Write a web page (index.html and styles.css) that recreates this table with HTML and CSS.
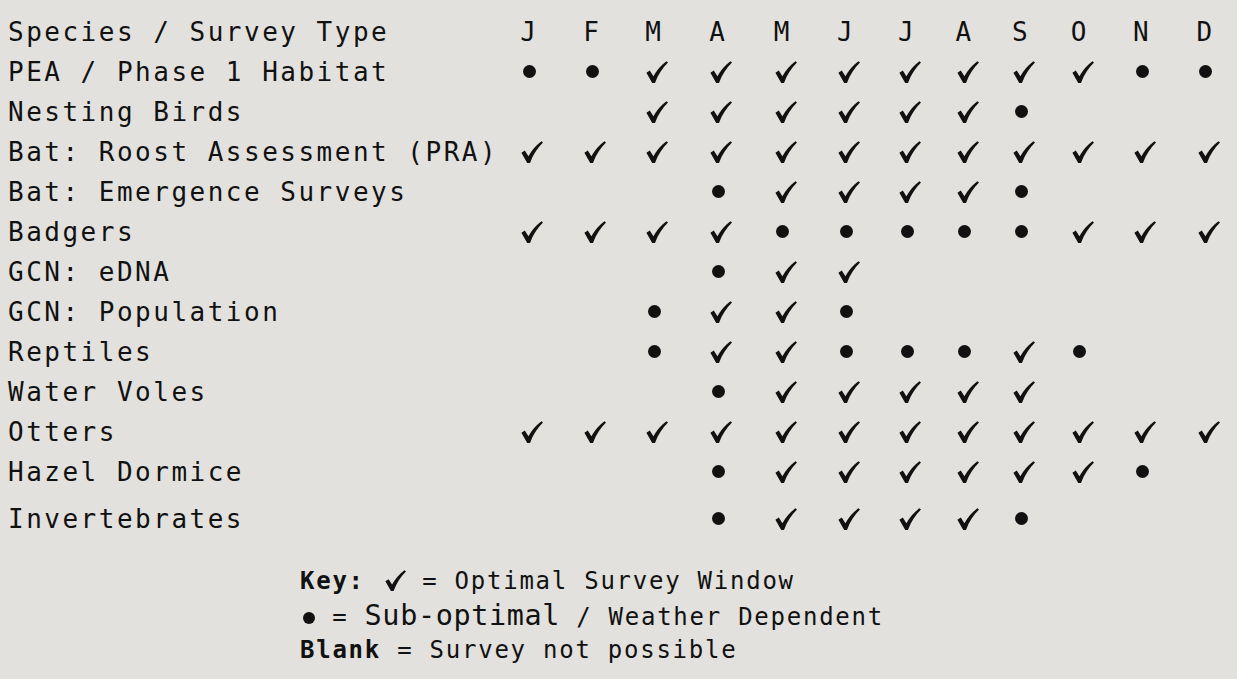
FILE: index.html
```html
<!DOCTYPE html>
<html lang="en">
<head>
<meta charset="utf-8">
<title>Survey Calendar</title>
<link rel="stylesheet" href="styles.css">
</head>
<body>
<svg class="defs" width="0" height="0" aria-hidden="true">
  <defs>
    <symbol id="tick" viewBox="0 0 22 22">
      <path d="M0.4 11.8 L3.8 9.6 L7.4 15.2 C10.6 9.6 15 4 20.4 0.2 L22 1.6 C16.6 6.8 12.2 13.6 9 21.9 L6.2 21.9 Z"/>
    </symbol>
  </defs>
</svg>
<main class="page">
  <div class="schedule">
    <div class="row head">
      <span class="label">Species / Survey Type</span>
      <span>J</span><span>F</span><span>M</span><span>A</span><span>M</span><span>J</span><span>J</span><span>A</span><span>S</span><span>O</span><span>N</span><span>D</span>
    </div>
    <div class="row">
      <span class="label">PEA / Phase 1 Habitat</span>
      <span><i class="dot"></i></span><span><i class="dot"></i></span><span><svg class="ck"><use href="#tick"/></svg></span><span><svg class="ck"><use href="#tick"/></svg></span><span><svg class="ck"><use href="#tick"/></svg></span><span><svg class="ck"><use href="#tick"/></svg></span><span><svg class="ck"><use href="#tick"/></svg></span><span><svg class="ck"><use href="#tick"/></svg></span><span><svg class="ck"><use href="#tick"/></svg></span><span><svg class="ck"><use href="#tick"/></svg></span><span><i class="dot"></i></span><span><i class="dot"></i></span>
    </div>
    <div class="row">
      <span class="label">Nesting Birds</span>
      <span></span><span></span><span><svg class="ck"><use href="#tick"/></svg></span><span><svg class="ck"><use href="#tick"/></svg></span><span><svg class="ck"><use href="#tick"/></svg></span><span><svg class="ck"><use href="#tick"/></svg></span><span><svg class="ck"><use href="#tick"/></svg></span><span><svg class="ck"><use href="#tick"/></svg></span><span><i class="dot"></i></span><span></span><span></span><span></span>
    </div>
    <div class="row">
      <span class="label">Bat: Roost Assessment (PRA)</span>
      <span><svg class="ck"><use href="#tick"/></svg></span><span><svg class="ck"><use href="#tick"/></svg></span><span><svg class="ck"><use href="#tick"/></svg></span><span><svg class="ck"><use href="#tick"/></svg></span><span><svg class="ck"><use href="#tick"/></svg></span><span><svg class="ck"><use href="#tick"/></svg></span><span><svg class="ck"><use href="#tick"/></svg></span><span><svg class="ck"><use href="#tick"/></svg></span><span><svg class="ck"><use href="#tick"/></svg></span><span><svg class="ck"><use href="#tick"/></svg></span><span><svg class="ck"><use href="#tick"/></svg></span><span><svg class="ck"><use href="#tick"/></svg></span>
    </div>
    <div class="row">
      <span class="label">Bat: Emergence Surveys</span>
      <span></span><span></span><span></span><span><i class="dot"></i></span><span><svg class="ck"><use href="#tick"/></svg></span><span><svg class="ck"><use href="#tick"/></svg></span><span><svg class="ck"><use href="#tick"/></svg></span><span><svg class="ck"><use href="#tick"/></svg></span><span><i class="dot"></i></span><span></span><span></span><span></span>
    </div>
    <div class="row">
      <span class="label">Badgers</span>
      <span><svg class="ck"><use href="#tick"/></svg></span><span><svg class="ck"><use href="#tick"/></svg></span><span><svg class="ck"><use href="#tick"/></svg></span><span><svg class="ck"><use href="#tick"/></svg></span><span><i class="dot"></i></span><span><i class="dot"></i></span><span><i class="dot"></i></span><span><i class="dot"></i></span><span><i class="dot"></i></span><span><svg class="ck"><use href="#tick"/></svg></span><span><svg class="ck"><use href="#tick"/></svg></span><span><svg class="ck"><use href="#tick"/></svg></span>
    </div>
    <div class="row">
      <span class="label">GCN: eDNA</span>
      <span></span><span></span><span></span><span><i class="dot"></i></span><span><svg class="ck"><use href="#tick"/></svg></span><span><svg class="ck"><use href="#tick"/></svg></span><span></span><span></span><span></span><span></span><span></span><span></span>
    </div>
    <div class="row">
      <span class="label">GCN: Population</span>
      <span></span><span></span><span><i class="dot"></i></span><span><svg class="ck"><use href="#tick"/></svg></span><span><svg class="ck"><use href="#tick"/></svg></span><span><i class="dot"></i></span><span></span><span></span><span></span><span></span><span></span><span></span>
    </div>
    <div class="row">
      <span class="label">Reptiles</span>
      <span></span><span></span><span><i class="dot"></i></span><span><svg class="ck"><use href="#tick"/></svg></span><span><svg class="ck"><use href="#tick"/></svg></span><span><i class="dot"></i></span><span><i class="dot"></i></span><span><i class="dot"></i></span><span><svg class="ck"><use href="#tick"/></svg></span><span><i class="dot"></i></span><span></span><span></span>
    </div>
    <div class="row">
      <span class="label">Water Voles</span>
      <span></span><span></span><span></span><span><i class="dot"></i></span><span><svg class="ck"><use href="#tick"/></svg></span><span><svg class="ck"><use href="#tick"/></svg></span><span><svg class="ck"><use href="#tick"/></svg></span><span><svg class="ck"><use href="#tick"/></svg></span><span><svg class="ck"><use href="#tick"/></svg></span><span></span><span></span><span></span>
    </div>
    <div class="row">
      <span class="label">Otters</span>
      <span><svg class="ck"><use href="#tick"/></svg></span><span><svg class="ck"><use href="#tick"/></svg></span><span><svg class="ck"><use href="#tick"/></svg></span><span><svg class="ck"><use href="#tick"/></svg></span><span><svg class="ck"><use href="#tick"/></svg></span><span><svg class="ck"><use href="#tick"/></svg></span><span><svg class="ck"><use href="#tick"/></svg></span><span><svg class="ck"><use href="#tick"/></svg></span><span><svg class="ck"><use href="#tick"/></svg></span><span><svg class="ck"><use href="#tick"/></svg></span><span><svg class="ck"><use href="#tick"/></svg></span><span><svg class="ck"><use href="#tick"/></svg></span>
    </div>
    <div class="row">
      <span class="label">Hazel Dormice</span>
      <span></span><span></span><span></span><span><i class="dot"></i></span><span><svg class="ck"><use href="#tick"/></svg></span><span><svg class="ck"><use href="#tick"/></svg></span><span><svg class="ck"><use href="#tick"/></svg></span><span><svg class="ck"><use href="#tick"/></svg></span><span><svg class="ck"><use href="#tick"/></svg></span><span><svg class="ck"><use href="#tick"/></svg></span><span><i class="dot"></i></span><span></span>
    </div>
    <div class="row last">
      <span class="label">Invertebrates</span>
      <span></span><span></span><span></span><span><i class="dot"></i></span><span><svg class="ck"><use href="#tick"/></svg></span><span><svg class="ck"><use href="#tick"/></svg></span><span><svg class="ck"><use href="#tick"/></svg></span><span><svg class="ck"><use href="#tick"/></svg></span><span><i class="dot"></i></span><span></span><span></span><span></span>
    </div>
  </div>
  <div class="key">
    <p><b>Key:</b> <svg class="key-ck"><use href="#tick"/></svg> = Optimal Survey Window</p>
    <p><i class="key-dot"></i> = <span class="big">Sub-optimal</span> / Weather Dependent</p>
    <p><b>Blank</b> = Survey not possible</p>
  </div>
</main>
</body>
</html>
```

FILE: styles.css
```css
html, body {
  margin: 0;
  padding: 0;
  background: #e2e1dd;
}

body {
  color: #111;
  font-family: "DejaVu Sans Mono", "Liberation Mono", monospace;
}

.defs {
  position: absolute;
  width: 0;
  height: 0;
  overflow: hidden;
}

.page {
  padding: 12px 0 0 8px;
}

.row {
  display: grid;
  grid-template-columns: 489px 64.5px 61.5px 62.5px 65.5px 63.5px 63px 59px 56px 57px 60.5px 64px 63px;
  height: 40px;
  align-items: center;
  font-size: 26px;
  letter-spacing: 2.5px;
}

.row > span {
  display: flex;
  justify-content: center;
  align-items: center;
  height: 40px;
  line-height: 40px;
  white-space: nowrap;
}

.row > .label {
  justify-content: flex-start;
}

.row.last {
  margin-top: 7px;
}

.ck {
  width: 22px;
  height: 22px;
  fill: #111;
  margin-left: 6px;
  margin-top: -1px;
}

.dot {
  display: block;
  width: 13px;
  height: 13px;
  border-radius: 50%;
  background: #111;
  margin-top: -1px;
}

.key {
  margin: 25px 0 0 292px;
  font-size: 24px;
  letter-spacing: 1.75px;
}

.key p {
  margin: 0;
  height: 34.5px;
  line-height: 34.5px;
  white-space: nowrap;
}

.key b {
  font-weight: bold;
}

.key-ck {
  width: 21px;
  height: 21px;
  fill: #111;
  vertical-align: -2px;
  margin-left: 4px;
}

.key-dot {
  display: inline-block;
  width: 12px;
  height: 12px;
  border-radius: 50%;
  background: #111;
  margin: 0 1px 0 3px;
  vertical-align: 1px;
}

.big {
  font-size: 28.5px;
  letter-spacing: 0.6px;
}
```
